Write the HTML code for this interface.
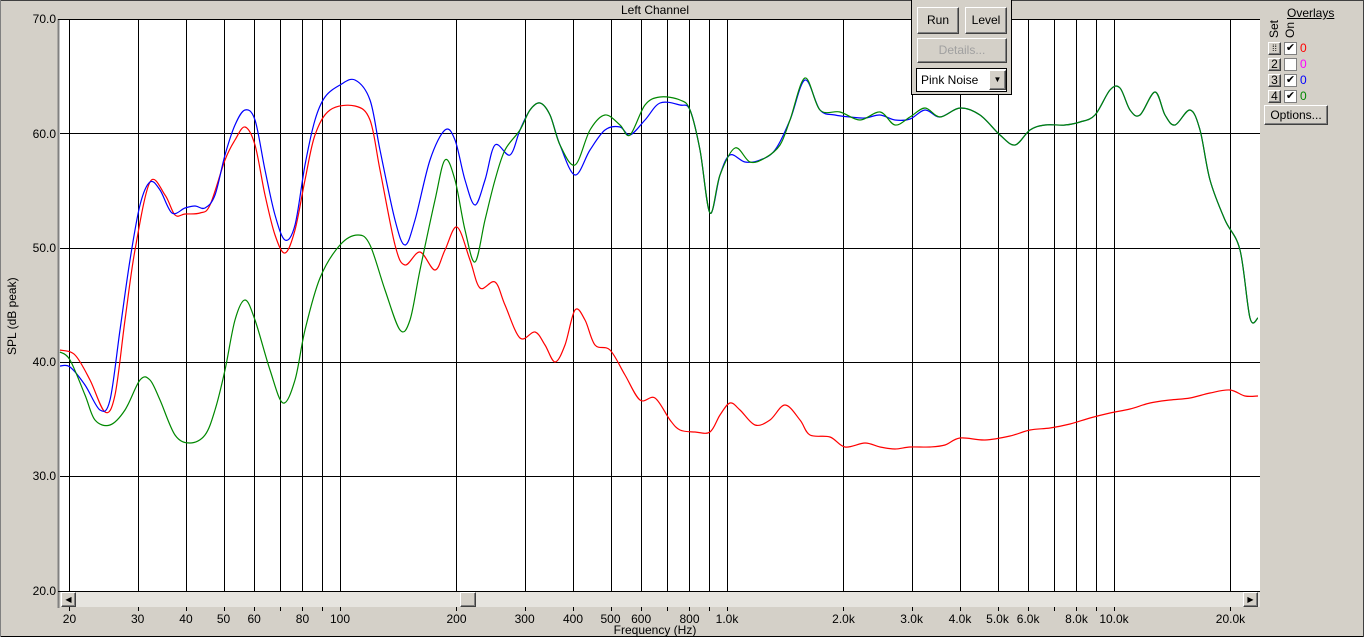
<!DOCTYPE html>
<html><head><meta charset="utf-8"><style>
body{margin:0;width:1364px;height:637px;overflow:hidden;background:#d4d0c8;font-family:"Liberation Sans",sans-serif;font-size:12px;color:#000;position:relative}
.a{position:absolute}
.btn{position:absolute;background:#d4d0c8;border:1px solid;border-color:#fff #404040 #404040 #fff;box-shadow:inset -1px -1px #808080;text-align:center;font-size:12px}
.yl{position:absolute;left:20px;width:36px;text-align:right;font-size:12px}
.xl{position:absolute;top:612px;font-size:12px;transform:translateX(-50%)}
</style></head><body>
<div class="a" style="left:0;top:0;width:1364px;height:1px;background:#404040"></div>
<div class="a" style="left:0;top:636px;width:1364px;height:1px;background:#000"></div>
<div class="a" style="left:1363px;top:0;width:1px;height:637px;background:#404040"></div>
<div class="a" style="left:0;top:0;width:1px;height:637px;background:#808080"></div>
<div class="a" style="top:3px;text-align:center;left:0;width:1310px">Left Channel</div>
<div class="a" style="left:5px;transform:rotate(-90deg);transform-origin:0 0;top:355px;font-size:12px">SPL (dB peak)</div>
<div class="yl" style="top:12px">70.0</div>
<div class="yl" style="top:127px">60.0</div>
<div class="yl" style="top:241px">50.0</div>
<div class="yl" style="top:355px">40.0</div>
<div class="yl" style="top:469px">30.0</div>
<div class="yl" style="top:584px">20.0</div>
<svg class="a" style="left:0;top:0" width="1364" height="637" id="s">
<rect x="58" y="19" width="1202" height="573" fill="#fff"/>
<line x1="58.5" y1="19" x2="58.5" y2="608" stroke="#808080" stroke-width="2"/>
<line x1="58" y1="19.5" x2="1260" y2="19.5" stroke="#000"/>
<g id="grid" stroke="#000" stroke-width="1"></g>
<g id="curves" fill="none" stroke-width="1.2"></g>
<rect x="60" y="591" width="1200" height="16" fill="#e6e4df"/>
<line x1="58" y1="591.5" x2="1260" y2="591.5" stroke="#000"/>
</svg>
<div class="btn" style="left:61px;top:592px;width:13px;height:13px;font-size:8px;line-height:13px">◀</div>
<div class="btn" style="left:460px;top:592px;width:14px;height:13px"></div>
<div class="btn" style="left:1243px;top:592px;width:13px;height:13px;font-size:8px;line-height:13px">▶</div>
<div id="xl"></div>
<div class="a" style="left:0;top:623px;width:1310px;text-align:center">Frequency (Hz)</div>
<div class="a" style="left:911px;top:0;width:99px;height:94px;border:1px solid #000;border-top:none;background:#d4d0c8"></div>
<div class="btn" style="left:917px;top:7px;width:40px;height:25px;line-height:25px">Run</div>
<div class="btn" style="left:965px;top:7px;width:40px;height:25px;line-height:25px">Level</div>
<div class="btn" style="left:917px;top:38px;width:88px;height:23px;line-height:23px;color:#a0a0a0">Details...</div>
<div class="a" style="left:916px;top:68px;border:1px solid #000;background:#fff;line-height:22px;padding-left:4px;box-sizing:border-box;width:91px;height:24px">Pink Noise</div>
<div class="btn" style="left:989px;top:70px;width:15px;height:18px;font-size:8px;line-height:18px">▼</div>
<div class="a" style="left:1287px;top:6px;text-decoration:underline">Overlays</div>
<div class="a" style="left:1268px;top:38px;transform:rotate(-90deg);transform-origin:0 0;line-height:12px">Set</div>
<div class="a" style="left:1284px;top:38px;transform:rotate(-90deg);transform-origin:0 0;line-height:12px">On</div>
<div class="btn" style="left:1268px;top:42px;width:11px;height:11px;font-size:9px;line-height:11px">⁞⁞</div>
<div class="btn" style="left:1268px;top:58px;width:11px;height:11px;line-height:11px">2</div>
<div class="btn" style="left:1268px;top:74px;width:11px;height:11px;line-height:11px">3</div>
<div class="btn" style="left:1268px;top:90px;width:11px;height:11px;line-height:11px">4</div>
<div class="a" style="left:1284px;top:42px;width:11px;height:11px;background:#fff;border:1px solid #808080;font-size:11px;line-height:11px;text-align:center">✔</div>
<div class="a" style="left:1284px;top:58px;width:11px;height:11px;background:#fff;border:1px solid #808080"></div>
<div class="a" style="left:1284px;top:74px;width:11px;height:11px;background:#fff;border:1px solid #808080;font-size:11px;line-height:11px;text-align:center">✔</div>
<div class="a" style="left:1284px;top:90px;width:11px;height:11px;background:#fff;border:1px solid #808080;font-size:11px;line-height:11px;text-align:center">✔</div>
<div class="a" style="left:1300px;top:41px;color:#f00">0</div>
<div class="a" style="left:1300px;top:57px;color:#f0f">0</div>
<div class="a" style="left:1300px;top:73px;color:#00f">0</div>
<div class="a" style="left:1300px;top:89px;color:#080">0</div>
<div class="btn" style="left:1264px;top:105px;width:62px;height:18px;line-height:18px">Options...</div>
<script>
var X=f=>340+387*Math.log10(f/100);
var g=document.getElementById('grid'),h='';
var fs=[20,30,40,50,60,70,80,90,100,200,300,400,500,600,700,800,900,1000,2000,3000,4000,5000,6000,7000,8000,9000,10000,20000];
fs.forEach(f=>{var x=Math.round(X(f))+.5;h+=`<line x1="${x}" y1="20" x2="${x}" y2="591"/><line x1="${x}" y1="607" x2="${x}" y2="611"/>`;});
[30,40,50,60].forEach(d=>{var y=Math.round(19+(70-d)*11.43)+.5;h+=`<line x1="60" y1="${y}" x2="1260" y2="${y}"/>`;});
g.innerHTML=h;
var lab={20:'20',30:'30',40:'40',50:'50',60:'60',80:'80',100:'100',200:'200',300:'300',400:'400',500:'500',600:'600',800:'800',1000:'1.0k',2000:'2.0k',3000:'3.0k',4000:'4.0k',5000:'5.0k',6000:'6.0k',8000:'8.0k',10000:'10.0k',20000:'20.0k'};
var s='';for(var k in lab)s+=`<div class="xl" style="left:${X(+k)}px">${lab[k]}</div>`;
document.getElementById('xl').innerHTML=s;
function P(a){var p=[];for(var i=0;i<a.length;i+=2)p.push([a[i],a[i+1]]);var d='M'+p[0];for(var i=0;i<p.length-1;i++){var p0=p[i-1]||p[i],p1=p[i],p2=p[i+1],p3=p[i+2]||p2;d+=`C${p1[0]+(p2[0]-p0[0])/6},${p1[1]+(p2[1]-p0[1])/6} ${p2[0]-(p3[0]-p1[0])/6},${p2[1]-(p3[1]-p1[1])/6} ${p2[0]},${p2[1]}`;}return d;}
var tail=[560,145,575,175,590,150,605,130,620,127,630,135,645,120,660,103,680,105,690,110,700,150,710,213,720,175,730,155,745,162,760,160,775,150,790,120,805,80,820,110,835,115,850,117,865,118,880,115,895,120,910,119,925,110,940,117,960,108,980,115,1000,135,1015,145,1030,130,1045,125,1065,125,1080,122,1095,115,1110,90,1120,88,1130,110,1140,115,1155,92,1165,115,1175,125,1190,110,1200,130,1210,180,1225,220,1240,250,1250,318,1258,318];
var blue=[60,366,70,367,85,385,100,410,110,400,120,330,130,260,140,205,150,182,160,190,172,213,185,208,195,206,205,208,215,195,225,155,235,125,245,110,255,120,265,170,275,215,285,240,295,225,305,165,315,120,325,97,340,85,355,80,370,100,380,150,395,220,405,245,415,220,430,160,445,130,455,140,465,180,475,205,485,180,495,145,510,155,520,130,530,110,540,103,550,115].concat(tail);
var gt=tail.slice();gt.splice(0,56,560,145,575,165,590,130,605,115,620,125,630,135,645,105,660,97,680,100,690,110,700,150,710,213,720,175,735,148,750,162,765,158,780,145,790,120,805,78,820,110,840,112,860,120,880,112,895,125,910,117,925,108,940,117);
var green=[60,352,70,360,85,395,95,420,110,425,125,410,140,380,150,380,160,400,175,435,190,443,205,435,215,410,225,370,235,320,245,300,255,320,270,370,283,403,295,380,305,330,320,278,340,245,358,235,370,245,385,290,400,330,410,320,420,270,435,200,445,160,455,180,465,230,475,262,485,220,495,180,505,150,520,130,530,110,540,103,550,115].concat(gt);
var red=[60,350,75,355,90,380,105,412,115,395,125,320,135,250,150,182,165,195,175,215,185,214,200,213,210,205,225,160,235,140,245,127,255,145,265,195,275,235,285,253,295,230,305,180,315,135,330,110,355,106,370,120,380,170,395,245,405,265,420,252,435,270,445,250,457,227,470,260,480,288,495,282,505,305,520,338,535,332,545,345,555,362,565,345,575,310,585,320,595,345,610,350,625,375,640,400,655,398,670,420,680,430,695,432,710,432,720,415,730,403,740,410,755,425,770,420,785,405,800,420,810,435,830,437,845,447,865,443,880,447,895,449,910,447,930,447,945,445,960,438,985,440,1010,436,1030,430,1050,428,1070,424,1090,418,1110,413,1130,409,1150,403,1170,400,1190,398,1210,393,1230,390,1245,396,1258,396];
document.getElementById('curves').innerHTML=`<path d="${P(red)}" stroke="#f00"/><path d="${P(blue)}" stroke="#00f"/><path d="${P(green)}" stroke="#080"/>`;
</script>
</body></html>
